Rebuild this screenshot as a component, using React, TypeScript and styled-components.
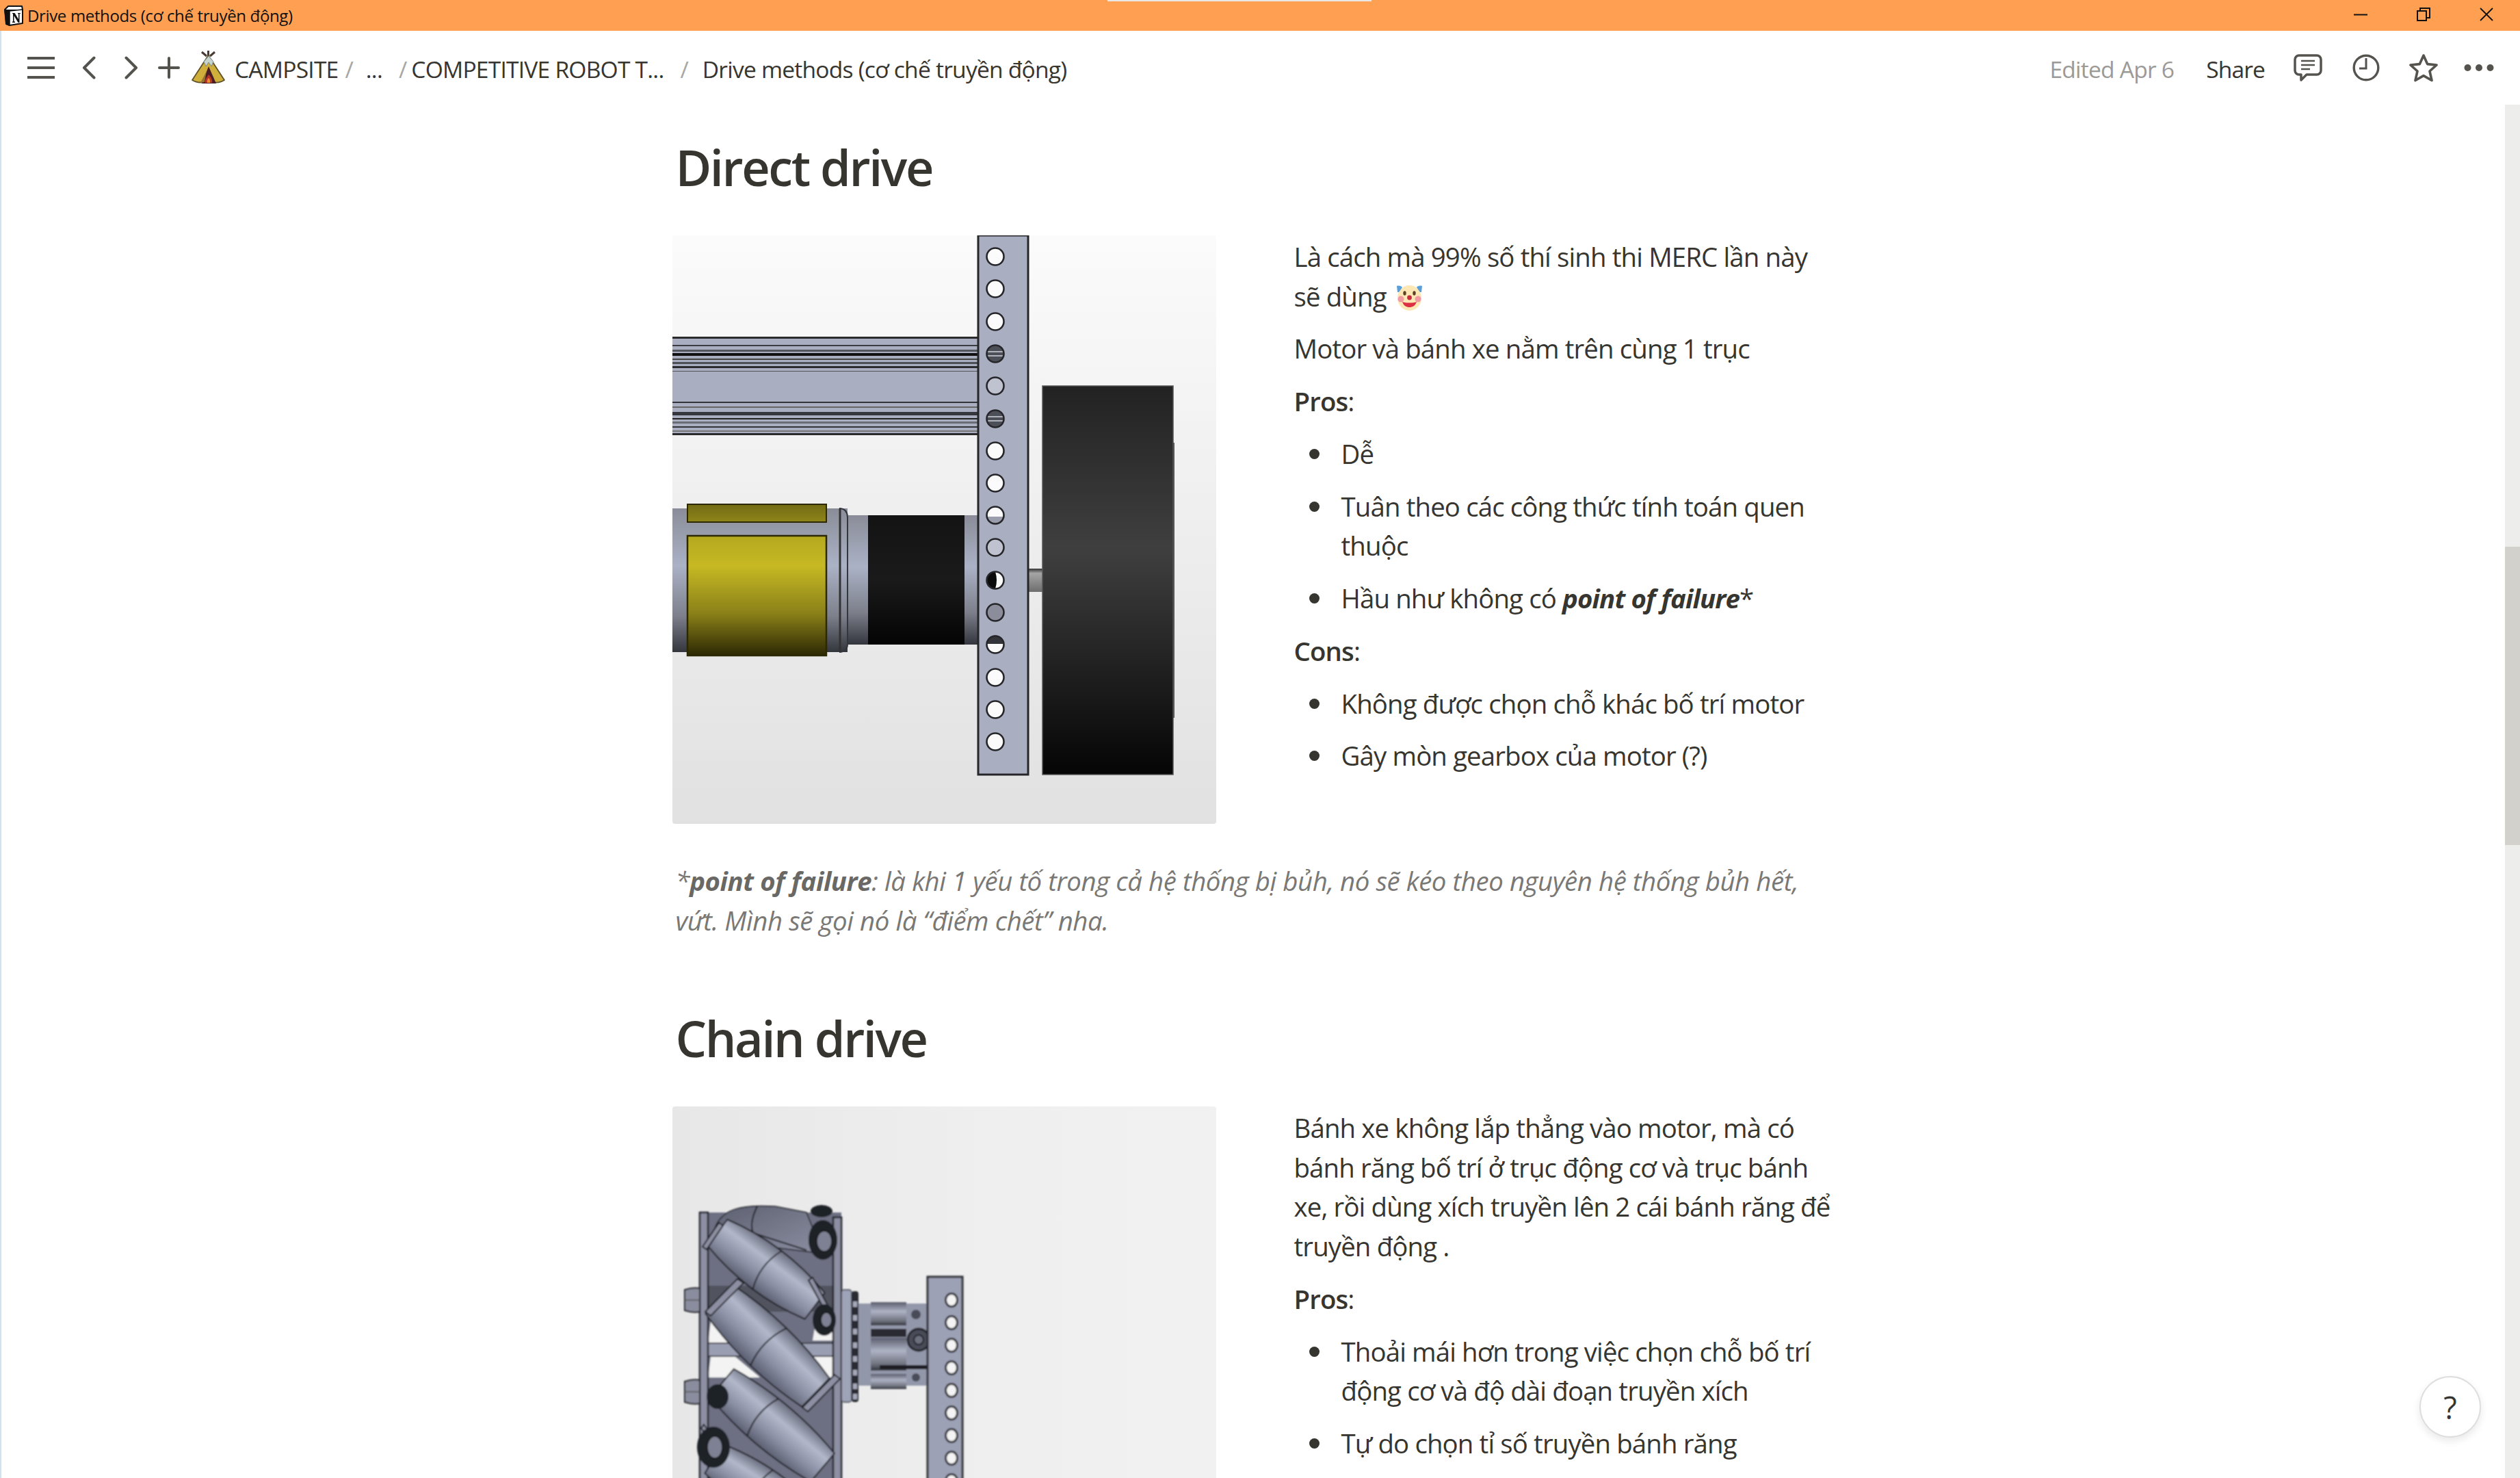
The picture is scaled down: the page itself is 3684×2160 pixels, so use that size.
import React from "react";
import styled, { createGlobalStyle } from "styled-components";

const FONT = `"Open Sans", "Noto Sans", sans-serif`;
const INK = "#37352f";
const ICON = "#55534e";

const Global = createGlobalStyle`
  *, *::before, *::after { box-sizing: border-box; }
  html, body { margin: 0; padding: 0; background: #fff; }
  body { font-family: ${FONT}; color: ${INK}; }
`;

const Window = styled.div`
  position: relative;
  width: 3684px;
  height: 2160px;
  overflow: hidden;
  display: flex;
  flex-direction: column;
  background: #fff;
`;

const TitleBar = styled.header`
  position: relative;
  height: 45px;
  flex: none;
  display: flex;
  align-items: center;
  background: #ff9f52;
  padding: 0 39px 0 6px;
`;
const TitleText = styled.span`
  margin-left: 6px;
  font-size: 24px;
  letter-spacing: -0.35px;
  color: #111;
  white-space: nowrap;
`;
const TabSliver = styled.div`
  position: absolute;
  top: 0;
  left: 1619px;
  width: 386px;
  height: 2px;
  background: #e9e8e6;
`;
const WinControls = styled.div`
  margin-left: auto;
  display: flex;
  align-items: center;
  gap: 72px;
  padding-bottom: 4px;
  svg { display: block; }
`;

const Shell = styled.div`
  flex: 1;
  display: flex;
  flex-direction: column;
  min-height: 0;
  border-left: 2px solid #d3e2f1;
`;

const TopBar = styled.nav`
  height: 108px;
  flex: none;
  display: flex;
  align-items: center;
  padding: 0 38px;
  color: ${ICON};
`;
const IconSlot = styled.span<{ $ml?: number }>`
  flex: none;
  display: flex;
  margin-left: ${(p) => p.$ml ?? 0}px;
  svg { display: block; }
`;
const Crumb = styled.span<{ $ml?: number }>`
  margin-left: ${(p) => p.$ml ?? 0}px;
  padding-top: 3px;
  font-size: 33.6px;
  letter-spacing: -0.78px;
  color: ${INK};
  white-space: nowrap;
`;
const Slash = styled.span<{ $ml: number }>`
  margin-left: ${(p) => p.$ml}px;
  padding-top: 3px;
  font-size: 33.6px;
  color: #a8a7a3;
`;
const Edited = styled.span`
  margin-left: auto;
  padding-top: 3px;
  font-size: 33.6px;
  letter-spacing: -0.78px;
  color: #9b9a97;
  white-space: nowrap;
`;
const ShareLabel = styled.span`
  margin-left: 47px;
  padding-top: 3px;
  font-size: 33.6px;
  letter-spacing: -0.9px;
  color: ${INK};
`;

const Body = styled.div`
  flex: 1;
  min-height: 0;
  display: flex;
`;
const Scroller = styled.main`
  flex: 1;
  min-width: 0;
  overflow: hidden;
  padding-top: 44px;
`;
const Track = styled.aside`
  flex: none;
  width: 22px;
  background: #ededeb;
`;
const Thumb = styled.div`
  margin-top: 646px;
  height: 436px;
  background: #d3d1cb;
`;

const Doc = styled.article`
  width: 1699px;
  margin: 0 auto;
`;
const Heading = styled.h2<{ $mt?: number }>`
  margin: ${(p) => p.$mt ?? 0}px 0 53px;
  padding-left: 5px;
  font-size: 72px;
  line-height: 94px;
  font-weight: 600;
  letter-spacing: -2.4px;
  color: ${INK};
`;
const Columns = styled.section`
  display: grid;
  grid-template-columns: 795px 1fr;
  column-gap: 114px;
  align-items: start;
`;
const Figure = styled.figure<{ $h: number }>`
  margin: 0;
  height: ${(p) => p.$h}px;
  border-radius: 4px;
  overflow: hidden;
  svg { display: block; }
`;
const Stack = styled.div`
  display: flex;
  flex-direction: column;
  gap: 19.2px;
  padding-top: 3px;
`;
const Para = styled.p`
  margin: 0;
  font-size: 38.4px;
  line-height: 57.6px;
  letter-spacing: -0.87px;
  white-space: nowrap;
`;
const Bold = styled.span`
  font-weight: 600;
`;
const Item = styled.div`
  display: flex;
  align-items: flex-start;
  font-size: 38.4px;
  line-height: 57.6px;
  letter-spacing: -0.87px;
  white-space: nowrap;
`;
const Bullet = styled.i`
  flex: none;
  width: 15px;
  height: 15px;
  margin: 21px 32px 0 22px;
  border-radius: 50%;
  background: ${INK};
`;
const Note = styled.p`
  margin: 55px 0 0;
  padding-left: 5px;
  font-size: 38.4px;
  line-height: 57.6px;
  letter-spacing: -0.43px;
  font-style: italic;
  color: #7a7875;
  white-space: nowrap;
  b { font-weight: 700; color: #6a6864; }
`;
const Emoji = styled.span`
  display: inline-block;
  vertical-align: -6px;
  margin-left: 6px;
  svg { display: block; }
`;
const HelpButton = styled.button`
  position: absolute;
  right: 57px;
  bottom: 59px;
  width: 90px;
  height: 90px;
  padding: 0;
  border-radius: 50%;
  border: 2px solid #dedede;
  background: #fff;
  box-shadow: 0 5px 12px rgba(15, 15, 15, 0.09);
  font-family: ${FONT};
  font-size: 45px;
  line-height: 1;
  color: ${INK};
`;

const NotionLogo = () => (
  <svg width="28" height="30" viewBox="0 0 28 30">
    <path d="M1 6 L6 1 L26 1 L27 6 L27 26 L8 29 L3 27 Z" fill="#fff" stroke="#111" strokeWidth="2" strokeLinejoin="round" />
    <path d="M1 6 L8 8 L27 6 M8 8 L8 29 L3 27 L1 6" fill="#111" stroke="#111" strokeWidth="1.5" strokeLinejoin="round" />
    <path d="M11 10 L24 9 L24 25 L11 26 Z" fill="#fff" />
    <path d="M12 11 H15.5 L21 20 V12 H20 V11 H24 V12 H22.5 V25 H20.5 L14.5 15 V23.5 H16 V25 H12 V23.5 H13 V12 H12 Z" fill="#111" />
  </svg>
);

const Minimize = () => (
  <svg width="20" height="20" viewBox="0 0 20 20"><path d="M0 10.5 H20" stroke="#111" strokeWidth="2" /></svg>
);
const Restore = () => (
  <svg width="20" height="20" viewBox="0 0 20 20" fill="none" stroke="#111" strokeWidth="2">
    <rect x="1" y="5" width="13" height="14" /><path d="M5 4 V1 H19 V15 H15" />
  </svg>
);
const CloseX = () => (
  <svg width="20" height="20" viewBox="0 0 20 20"><path d="M1 1 L19 19 M19 1 L1 19" stroke="#111" strokeWidth="1.8" /></svg>
);

const Hamburger = () => (
  <svg width="40" height="32" viewBox="0 0 40 32"><path d="M0 2 H40 M0 16 H40 M0 30 H40" stroke={ICON} strokeWidth="4" /></svg>
);
const ChevronL = () => (
  <svg width="20" height="34" viewBox="0 0 20 34" fill="none"><path d="M17.5 2.5 L3 17 L17.5 31.5" stroke={ICON} strokeWidth="4" strokeLinecap="round" strokeLinejoin="round" /></svg>
);
const ChevronR = () => (
  <svg width="20" height="34" viewBox="0 0 20 34" fill="none"><path d="M2.5 2.5 L17 17 L2.5 31.5" stroke={ICON} strokeWidth="4" strokeLinecap="round" strokeLinejoin="round" /></svg>
);
const Plus = () => (
  <svg width="32" height="32" viewBox="0 0 32 32"><path d="M16 2 V30 M2 16 H30" stroke={ICON} strokeWidth="4" strokeLinecap="round" /></svg>
);
const Tent = () => (
  <svg width="50" height="54" viewBox="0 0 50 54">
    <path d="M22 10 L15 4 M27 10 L34 4 M24.5 10 V2" stroke="#4a3a33" strokeWidth="3" />
    <path d="M24.5 9 L48 45 C42 49 36 49 31 48 L19 48 C13 49 7 49 1 45 Z" fill="#cfae3b" stroke="#5e5228" strokeWidth="1.8" strokeLinejoin="round" />
    <path d="M18 18 L25 10 L32 18 L29 25 L25 19 L21 25 Z" fill="#c7d3cf" stroke="#7d8a87" strokeWidth="1" />
    <path d="M25 25 L36 50 L15 50 Z" fill="#4a1c25" />
    <path d="M13 49 L22 32 L19 48 Z" fill="#96732f" />
    <path d="M25 37 C29 41 31 45 30 49 H20 C19 45 22 41 25 37 Z" fill="#b5352a" />
    <path d="M25 42 C27 44 27.5 46 27 49 H23 C22.5 46 23 44 25 42 Z" fill="#ee8f2d" />
  </svg>
);
const Comment = () => (
  <svg width="42" height="40" viewBox="0 0 42 40" fill="none" stroke={ICON} strokeLinejoin="round">
    <path d="M8 2 H34 A6 6 0 0 1 40 8 V24 A6 6 0 0 1 34 30 H19 L11 38 V30 H8 A6 6 0 0 1 2 24 V8 A6 6 0 0 1 8 2 Z" strokeWidth="3.5" />
    <path d="M11 10 H31 M11 16 H31 M11 22 H24" strokeWidth="2.6" />
  </svg>
);
const Clock = () => (
  <svg width="40" height="40" viewBox="0 0 40 40" fill="none" stroke={ICON}>
    <circle cx="20" cy="20" r="17.8" strokeWidth="3.4" />
    <path d="M20 6 V21 H10" strokeWidth="3" />
  </svg>
);
const Star = () => (
  <svg width="44" height="42" viewBox="0 0 44 42" fill="none">
    <path d="M22 3 L27.6 15.6 L41 17 L31 26 L34 39.5 L22 32.6 L10 39.5 L13 26 L3 17 L16.4 15.6 Z" stroke={ICON} strokeWidth="3.6" strokeLinejoin="round" />
  </svg>
);
const Dots = () => (
  <svg width="44" height="12" viewBox="0 0 44 12" fill={ICON}>
    <circle cx="5.5" cy="6" r="5" /><circle cx="22" cy="6" r="5" /><circle cx="38.5" cy="6" r="5" />
  </svg>
);
const Clown = () => (
  <svg width="37" height="38" viewBox="0 0 37 38">
    <ellipse cx="18.5" cy="19.5" rx="17.5" ry="18.5" fill="#fde7b4" />
    <path d="M0 2 C3 1 7 2 8 4 L3 11 L1 11 Z M37 2 C34 1 30 2 29 4 L34 11 L36 11 Z" fill="#5a9fd8" />
    <circle cx="6" cy="21" r="4.5" fill="#f19aa4" /><circle cx="31" cy="21" r="4.5" fill="#f19aa4" />
    <ellipse cx="11.5" cy="12.5" rx="2.2" ry="3.2" fill="#5b4225" /><ellipse cx="25.5" cy="12.5" rx="2.2" ry="3.2" fill="#5b4225" />
    <circle cx="18.5" cy="19" r="3.4" fill="#c92c3e" />
    <path d="M8 25 C12 27 25 27 29 25 C27 31 23 33 18.5 33 C14 33 10 31 8 25 Z" fill="#dd2e44" />
  </svg>
);

const HOLES: { y: number; kind: string }[] = [
  31, 78, 126, 173, 220, 268, 315, 362, 409, 456, 504, 551, 598, 646, 693, 740,
].map((y, i) => ({
  y,
  kind: ({ 3: "dark", 4: "plain", 5: "dark", 8: "halfTop", 9: "plain", 10: "halfLeft", 11: "grey", 12: "darkTop" } as Record<number, string>)[i] ?? "white",
}));

const DirectDriveRender = () => (
  <svg width="795" height="860" viewBox="0 0 795 860">
    <defs>
      <linearGradient id="bg1" x1="0" y1="0" x2="0" y2="1"><stop offset="0" stopColor="#fbfbfb" /><stop offset="1" stopColor="#e1e1e1" /></linearGradient>
      <linearGradient id="metal" x1="0" y1="0" x2="0" y2="1"><stop offset="0" stopColor="#8a8d98" /><stop offset=".4" stopColor="#abb2c6" /><stop offset=".75" stopColor="#7d808b" /><stop offset="1" stopColor="#33363d" /></linearGradient>
      <linearGradient id="yellow" x1="0" y1="0" x2="0" y2="1"><stop offset="0" stopColor="#b4a81f" /><stop offset=".25" stopColor="#c6b923" /><stop offset=".65" stopColor="#8a8018" /><stop offset="1" stopColor="#2c2804" /></linearGradient>
      <linearGradient id="olive" x1="0" y1="0" x2="0" y2="1"><stop offset="0" stopColor="#716a14" /><stop offset="1" stopColor="#8f851a" /></linearGradient>
      <linearGradient id="blackCan" x1="0" y1="0" x2="0" y2="1"><stop offset="0" stopColor="#131313" /><stop offset=".5" stopColor="#1a1a1a" /><stop offset="1" stopColor="#040404" /></linearGradient>
      <linearGradient id="tyre" x1="0" y1="0" x2="0" y2="1"><stop offset="0" stopColor="#222" /><stop offset=".42" stopColor="#3f3f3f" /><stop offset="1" stopColor="#050505" /></linearGradient>
      <linearGradient id="axle" x1="0" y1="0" x2="0" y2="1"><stop offset="0" stopColor="#333" /><stop offset=".2" stopColor="#a5a5a5" /><stop offset="1" stopColor="#6d6d6d" /></linearGradient>
    </defs>
    <rect width="795" height="860" fill="url(#bg1)" />
    <rect x="0" y="148" width="447" height="144" fill="#a9afc1" />
    {[[148, 3, "#2a2a2d"], [160, 2, "#3b3c42"], [167, 3, "#55575f"], [172, 4, "#111"], [180, 2, "#444"], [185, 3, "#4d4f57"], [191, 3, "#2b2c30"], [198, 1, "#555"],
      [243, 2, "#33343a"], [250, 2, "#666"], [258, 5, "#35363b"], [267, 2, "#222"], [272, 3, "#6b6d76"], [279, 2, "#33343a"], [285, 2, "#777"], [289, 3, "#2a2a2d"]].map(([y, h, c]) => (
      <rect key={String(y)} x="0" y={y as number} width="447" height={h as number} fill={c as string} />
    ))}
    <rect x="0" y="399" width="256" height="210" fill="url(#metal)" />
    <path d="M245 399 Q256 400 256 412 V597 Q256 608 245 609 Z" fill="url(#metal)" stroke="#33363d" strokeWidth="2" />
    <path d="M245 399 V609" stroke="#333" strokeWidth="3" />
    <rect x="22" y="393" width="203" height="26" fill="url(#olive)" stroke="#2c2804" strokeWidth="2" />
    <rect x="22" y="439" width="203" height="175" fill="url(#yellow)" stroke="#2c2804" strokeWidth="2.5" />
    <rect x="257" y="409" width="29" height="189" fill="url(#metal)" />
    <rect x="286" y="409" width="141" height="189" fill="url(#blackCan)" />
    <rect x="427" y="409" width="20" height="189" fill="url(#metal)" />
    <rect x="520" y="487" width="21" height="34" fill="url(#axle)" />
    <rect x="541" y="220" width="191" height="568" fill="url(#tyre)" stroke="#555" strokeWidth="1.5" />
    <rect x="732" y="303" width="2" height="402" fill="#555" />
    <rect x="447" y="0" width="73" height="788" fill="#a9afc1" stroke="#26262a" strokeWidth="3" />
    {HOLES.map(({ y, kind }) => {
      const face = kind === "plain" ? "#bfc3d0" : kind === "grey" ? "#8b8e9a" : kind === "dark" ? "#4d4f58" : "#fbfbfb";
      return (
        <g key={y}>
          <circle cx="472" cy={y} r="12.5" fill={face} />
          {kind === "dark" && <path d={`M460 ${y - 3} H484 M460 ${y + 3} H484`} stroke="#cfd2db" strokeWidth="1.6" />}
          {kind === "halfTop" && <path d={`M459.5 ${y + 2} H484.5 A12.5 12.5 0 0 1 459.5 ${y + 2} Z`} fill="#9a9dab" />}
          {kind === "darkTop" && <path d={`M459.5 ${y - 1} H484.5 A12.5 12.5 0 0 0 459.5 ${y - 1} Z`} fill="#33343a" />}
          {kind === "halfLeft" && <path d={`M472 ${y - 12.5} A12.5 12.5 0 0 0 472 ${y + 12.5} Q476 ${y} 472 ${y - 12.5} Z`} fill="#0b0b0b" />}
          <circle cx="472" cy={y} r="12.5" fill="none" stroke="#26262a" strokeWidth="2.6" />
        </g>
      );
    })}
  </svg>
);

const Roller = ({ cx, cy, w, m, e, a, seam }: { cx: number; cy: number; w: number; m: number; e: number; a: number; seam: number }) => (
  <g transform={`translate(${cx} ${cy}) rotate(${a})`}>
    <path
      d={`M${-w / 2} ${-e} Q0 ${-(2 * m - e)} ${w / 2} ${-e} L${w / 2} ${e} Q0 ${2 * m - e} ${-w / 2} ${e} Z`}
      fill="url(#roller)"
      stroke="#1e1f24"
      strokeWidth="2"
      strokeLinejoin="round"
    />
    <path d={`M${seam} ${-m} Q${seam - 14} 0 ${seam} ${m}`} fill="none" stroke="#1e1f24" strokeWidth="2" />
  </g>
);

const ChainDriveRender = () => (
  <svg width="795" height="860" viewBox="0 0 795 860">
    <defs>
      <linearGradient id="bg2" x1="0" y1="0" x2="1" y2="0"><stop offset="0" stopColor="#e7e7e7" /><stop offset=".6" stopColor="#efefef" /><stop offset="1" stopColor="#f1f1f1" /></linearGradient>
      <linearGradient id="roller" x1="0" y1="0" x2="0" y2="1"><stop offset="0" stopColor="#6a6e7f" /><stop offset=".32" stopColor="#b2b8ca" /><stop offset=".68" stopColor="#8a8ea2" /><stop offset="1" stopColor="#5a5e70" /></linearGradient>
      <linearGradient id="hub" x1="0" y1="0" x2="0" y2="1"><stop offset="0" stopColor="#5a5d6c" /><stop offset=".4" stopColor="#aeb3c5" /><stop offset=".8" stopColor="#70737f" /><stop offset="1" stopColor="#33353d" /></linearGradient>
      <linearGradient id="topRoller" x1="0" y1="0" x2="1" y2="1"><stop offset="0" stopColor="#5d6070" /><stop offset="1" stopColor="#8b8fa2" /></linearGradient>
      <filter id="soft"><feGaussianBlur stdDeviation="0.8" /></filter>
    </defs>
    <rect width="795" height="860" fill="url(#bg2)" />
    <g filter="url(#soft)">
      <rect x="40" y="155" width="207" height="400" fill="#6d7082" />
      <path d="M58 300 L52 345 L90 345 Z M56 366 L52 396 L128 396 L92 366 Z M212 300 L242 342 L205 342 Z M205 366 L240 366 L240 396 L222 396 Z" fill="#f3f3f3" />
      <path d="M40 262 L240 262 L240 300 L40 300 Z" fill="#3a3b44" opacity=".55" />
      <rect x="52" y="346" width="190" height="19" fill="#9a9eb2" stroke="#222" strokeWidth="1.5" />
      <rect x="40" y="155" width="12" height="400" fill="#8d90a3" stroke="#1e1f24" strokeWidth="2.5" />
      <rect x="235" y="162" width="12" height="393" fill="#8d90a3" stroke="#1e1f24" strokeWidth="2.5" />
      <path d="M62 178 C72 150 100 143 150 146 L196 155 L220 215 L100 200 Z" fill="url(#topRoller)" stroke="#1e1f24" strokeWidth="1.5" />
      <path d="M124 146 Q112 170 118 185 L196 210" fill="none" stroke="#1e1f24" strokeWidth="2" />
      <Roller cx={137} cy={238} w={178} m={35} e={24} a={37} seam={2} />
      <Roller cx={146} cy={466} w={192} m={36} e={27} a={40} seam={-18} />
      <Roller cx={120} cy={552} w={140} m={32} e={25} a={32} seam={12} />
      <Roller cx={139} cy={350} w={196} m={38} e={29} a={44} seam={2} />
      <path d="M48 300 L95 252 L104 258 L56 306 Z M190 440 L237 392 L245 398 L198 446 Z" fill="#8d90a3" stroke="#1e1f24" strokeWidth="2" />
      <path d="M44 205 L68 170 L74 174 L50 209 Z M205 250 L232 300 L226 304 L199 254 Z M46 465 L72 500 L66 505 L42 470 Z" fill="#8d90a3" stroke="#1e1f24" strokeWidth="2" />
      <g fill="#1f2026">
        <ellipse cx="220" cy="195" rx="21" ry="29" />
        <ellipse cx="222" cy="312" rx="17" ry="23" />
        <ellipse cx="66" cy="424" rx="16" ry="18" />
        <ellipse cx="60" cy="498" rx="24" ry="30" />
        <ellipse cx="218" cy="153" rx="16" ry="9" />
      </g>
      <g fill="#7d8193" stroke="#111" strokeWidth="1.5">
        <ellipse cx="222" cy="197" rx="11" ry="15" />
        <ellipse cx="225" cy="312" rx="8" ry="11" />
        <ellipse cx="62" cy="498" rx="11" ry="16" />
      </g>
      <path d="M18 268 Q30 264 40 266 V300 Q30 302 18 298 Z M18 402 Q30 398 40 400 V434 Q30 436 18 432 Z" fill="#8a8d9e" stroke="#1e1f24" strokeWidth="2" />
      <path d="M18 283 H40 M18 417 H40" stroke="#555" strokeWidth="1.5" />
      <rect x="247" y="268" width="15" height="164" rx="4" fill="#9ea3b8" stroke="#33353d" strokeWidth="1.5" />
      <rect x="262" y="270" width="10" height="162" rx="4" fill="#2a2b31" />
      {[285, 305, 325, 345, 365, 385, 405, 420].map((y) => (
        <rect key={y} x="264" y={y} width="6" height="8" fill="#a4a8ba" />
      ))}
      <rect x="272" y="288" width="100" height="120" fill="#9397aa" />
      <rect x="290" y="286" width="52" height="34" fill="url(#hub)" />
      <rect x="290" y="325" width="52" height="12" fill="#2a2b31" />
      <rect x="290" y="338" width="52" height="48" fill="url(#hub)" />
      <rect x="290" y="391" width="52" height="22" fill="url(#hub)" />
      <rect x="303" y="378" width="70" height="6" fill="#1e1f24" />
      <circle cx="360" cy="341" r="16" fill="#4a4c58" stroke="#1e1f24" strokeWidth="3" />
      <circle cx="360" cy="341" r="7" fill="#6c6f7e" stroke="#1e1f24" strokeWidth="2" />
      <circle cx="356" cy="304" r="7" fill="#4a4c58" />
      <circle cx="356" cy="396" r="6" fill="#4a4c58" />
      <rect x="373" y="249" width="51" height="620" fill="#9da1b5" stroke="#2a2b31" strokeWidth="3" />
      {[283, 316, 349, 382, 415, 448, 481, 514, 547].map((y) => (
        <ellipse key={y} cx="408" cy={y} rx="8.5" ry="9.5" fill="#f4f4f4" stroke="#2a2b31" strokeWidth="3" />
      ))}
    </g>
  </svg>
);

export default function App() {
  return (
    <>
      <Global />
      <Window>
        <TitleBar>
          <TabSliver />
          <NotionLogo />
          <TitleText>Drive methods (cơ chế truyền động)</TitleText>
          <WinControls>
            <Minimize />
            <Restore />
            <CloseX />
          </WinControls>
        </TitleBar>
        <Shell>
          <TopBar>
            <IconSlot><Hamburger /></IconSlot>
            <IconSlot $ml={40}><ChevronL /></IconSlot>
            <IconSlot $ml={42}><ChevronR /></IconSlot>
            <IconSlot $ml={29}><Plus /></IconSlot>
            <IconSlot $ml={17}><Tent /></IconSlot>
            <Crumb $ml={13}>CAMPSITE</Crumb>
            <Slash $ml={10}>/</Slash>
            <Crumb $ml={18}>...</Crumb>
            <Slash $ml={24}>/</Slash>
            <Crumb $ml={6}>COMPETITIVE ROBOT T...</Crumb>
            <Slash $ml={24}>/</Slash>
            <Crumb $ml={20}>Drive methods (cơ chế truyền động)</Crumb>
            <Edited>Edited Apr 6</Edited>
            <ShareLabel>Share</ShareLabel>
            <IconSlot $ml={42}><Comment /></IconSlot>
            <IconSlot $ml={44}><Clock /></IconSlot>
            <IconSlot $ml={42}><Star /></IconSlot>
            <IconSlot $ml={37}><Dots /></IconSlot>
          </TopBar>
          <Body>
            <Scroller>
              <Doc>
                <Heading>Direct drive</Heading>
                <Columns>
                  <Figure $h={860}><DirectDriveRender /></Figure>
                  <Stack>
                    <Para>
                      Là cách mà 99% số thí sinh thi MERC lần này
                      <br />
                      sẽ dùng <Emoji><Clown /></Emoji>
                    </Para>
                    <Para>Motor và bánh xe nằm trên cùng 1 trục</Para>
                    <Para><Bold>Pros</Bold>:</Para>
                    <Item><Bullet /><span>Dễ</span></Item>
                    <Item><Bullet /><span>Tuân theo các công thức tính toán quen<br />thuộc</span></Item>
                    <Item><Bullet /><span>Hầu như không có <b><em>point of failure</em></b>*</span></Item>
                    <Para><Bold>Cons</Bold>:</Para>
                    <Item><Bullet /><span>Không được chọn chỗ khác bố trí motor</span></Item>
                    <Item><Bullet /><span>Gây mòn gearbox của motor (?)</span></Item>
                  </Stack>
                </Columns>
                <Note>
                  *<b>point of failure</b>: là khi 1 yếu tố trong cả hệ thống bị bủh, nó sẽ kéo theo nguyên hệ thống bủh hết,
                  <br />
                  vứt. Mình sẽ gọi nó là “điểm chết” nha.
                </Note>
                <Heading $mt={96}>Chain drive</Heading>
                <Columns>
                  <Figure $h={860}><ChainDriveRender /></Figure>
                  <Stack>
                    <Para>
                      Bánh xe không lắp thẳng vào motor, mà có
                      <br />
                      bánh răng bố trí ở trục động cơ và trục bánh
                      <br />
                      xe, rồi dùng xích truyền lên 2 cái bánh răng để
                      <br />
                      truyền động .
                    </Para>
                    <Para><Bold>Pros</Bold>:</Para>
                    <Item><Bullet /><span>Thoải mái hơn trong việc chọn chỗ bố trí<br />động cơ và độ dài đoạn truyền xích</span></Item>
                    <Item><Bullet /><span>Tự do chọn tỉ số truyền bánh răng</span></Item>
                  </Stack>
                </Columns>
              </Doc>
            </Scroller>
            <Track><Thumb /></Track>
          </Body>
        </Shell>
        <HelpButton>?</HelpButton>
      </Window>
    </>
  );
}
